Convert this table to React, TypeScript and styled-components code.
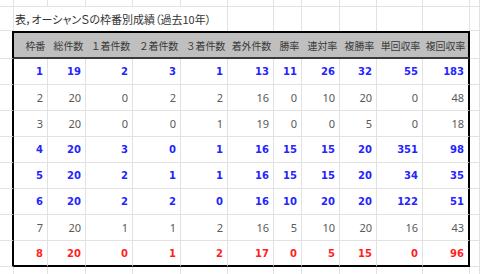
import { createGlobalStyle, styled } from "styled-components";

type Tone = "blue" | "grey" | "red";

const headers = [
  "枠番",
  "総件数",
  "１着件数",
  "２着件数",
  "３着件数",
  "着外件数",
  "勝率",
  "連対率",
  "複勝率",
  "単回収率",
  "複回収率",
];

const rows: { tone: Tone; values: number[] }[] = [
  { tone: "blue", values: [1, 19, 2, 3, 1, 13, 11, 26, 32, 55, 183] },
  { tone: "grey", values: [2, 20, 0, 2, 2, 16, 0, 10, 20, 0, 48] },
  { tone: "grey", values: [3, 20, 0, 0, 1, 19, 0, 0, 5, 0, 18] },
  { tone: "blue", values: [4, 20, 3, 0, 1, 16, 15, 15, 20, 351, 98] },
  { tone: "blue", values: [5, 20, 2, 1, 1, 16, 15, 15, 20, 34, 35] },
  { tone: "blue", values: [6, 20, 2, 2, 0, 16, 10, 20, 20, 122, 51] },
  { tone: "grey", values: [7, 20, 1, 1, 2, 16, 5, 10, 20, 16, 43] },
  { tone: "red", values: [8, 20, 0, 1, 2, 17, 0, 5, 15, 0, 96] },
];

const toneColor: Record<Tone, string> = {
  blue: "#2424ff",
  grey: "#595959",
  red: "#ff1f1f",
};

const GRID = "1px solid #e2e2e2";
const EDGE = "2px solid #000";

function App() {
  return (
    <>
      <GlobalStyle />
      <Sheet>
        {/* top partial row */}
        {Array.from({ length: 13 }).map((_, i) => (
          <Blank key={"top" + i} />
        ))}

        {/* title row */}
        <Blank />
        <Title>表，オーシャンＳの枠番別成績（過去10年）</Title>
        {Array.from({ length: 6 }).map((_, i) => (
          <Blank key={"tt" + i} $open />
        ))}
        <Blank />

        {/* header row */}
        <Blank $tableLeft />
        {headers.map((h, i) => (
          <Head key={h} $last={i === headers.length - 1}>
            {h}
          </Head>
        ))}
        <Blank />

        {/* data rows */}
        {rows.map((row, r) => (
          <Row key={r} row={row} isLast={r === rows.length - 1} />
        ))}

        {/* below table */}
        {Array.from({ length: 13 }).map((_, i) => (
          <Blank key={"bot" + i} $open />
        ))}
      </Sheet>
    </>
  );
}

function Row(props: { row: { tone: Tone; values: number[] }; isLast: boolean }) {
  return (
    <>
      <Blank $tableLeft />
      {props.row.values.map((v, i) => (
        <Num
          key={i}
          $tone={props.row.tone}
          $last={i === props.row.values.length - 1}
          $bottom={props.isLast}
        >
          {v}
        </Num>
      ))}
      <Blank />
    </>
  );
}

const GlobalStyle = createGlobalStyle`
  * { box-sizing: border-box; }
  html, body {
    margin: 0;
    padding: 0;
    background: #fff;
    overflow: hidden;
  }
`;

const Sheet = styled.div`
  display: grid;
  grid-template-columns: 14px 34px 38px 47px 48px 47px 46px 28px 38px 37px 46px 47px 1fr;
  grid-template-rows: 7px 24px 28px repeat(8, 26px) 1fr;
  width: 480px;
  height: 274px;
  background: #fff;
`;

const Blank = styled.div<{ $open?: boolean; $tableLeft?: boolean }>`
  border-right: ${(p) => (p.$tableLeft ? EDGE : GRID)};
  border-bottom: ${(p) => (p.$open ? "none" : GRID)};
`;

const Title = styled.div`
  grid-column: span 5;
  border-right: ${GRID};
  display: flex;
  align-items: center;
  padding-left: 1px;
  white-space: nowrap;
  font-family: "Noto Sans CJK JP", sans-serif;
  font-feature-settings: "palt";
  font-size: 11px;
  color: #333;
`;

const Head = styled.div<{ $last: boolean }>`
  display: flex;
  align-items: center;
  justify-content: flex-end;
  padding-right: 3px;
  background: #bfbfbf;
  border-top: ${EDGE};
  border-bottom: 2px solid #3a3a3a;
  border-right: ${(p) => (p.$last ? EDGE : "none")};
  white-space: nowrap;
  font-family: "Noto Sans CJK JP", sans-serif;
  font-size: 10px;
  letter-spacing: -0.2px;
  color: #3a3a3a;
`;

const Num = styled.div<{ $tone: Tone; $last: boolean; $bottom: boolean }>`
  display: flex;
  align-items: center;
  justify-content: flex-end;
  padding-right: 4px;
  border-right: ${(p) => (p.$last ? EDGE : GRID)};
  border-bottom: ${(p) => (p.$bottom ? EDGE : GRID)};
  font-family: ${(p) =>
    p.$tone === "grey" ? '"Noto Sans", sans-serif' : '"DejaVu Sans", sans-serif'};
  font-weight: ${(p) => (p.$tone === "grey" ? 400 : 700)};
  font-size: ${(p) => (p.$tone === "grey" ? "11px" : "10px")};
  color: ${(p) => toneColor[p.$tone]};
`;

export default App;
